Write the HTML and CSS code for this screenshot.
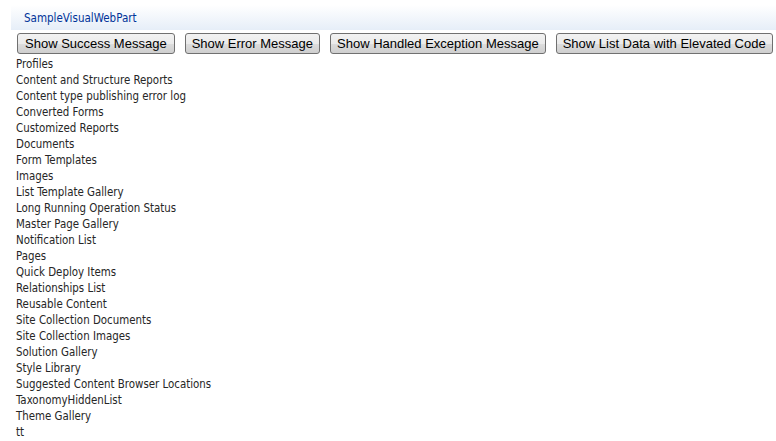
FILE: index.html
```html
<!DOCTYPE html>
<html>
<head>
<meta charset="utf-8">
<link rel="stylesheet" href="styles.css">
</head>
<body>
<div class="webpart">
  <div class="title-bar"><span class="title">SampleVisualWebPart</span></div>
  <div class="content">
    <div class="buttons">
      <button class="btn btn-wide">Show Success Message</button>
      <button class="btn">Show Error Message</button>
      <button class="btn">Show Handled Exception Message</button>
      <button class="btn">Show List Data with Elevated Code</button>
    </div>
    <ul class="lists">
      <li>Profiles</li>
      <li>Content and Structure Reports</li>
      <li>Content type publishing error log</li>
      <li>Converted Forms</li>
      <li>Customized Reports</li>
      <li>Documents</li>
      <li>Form Templates</li>
      <li>Images</li>
      <li>List Template Gallery</li>
      <li>Long Running Operation Status</li>
      <li>Master Page Gallery</li>
      <li>Notification List</li>
      <li>Pages</li>
      <li>Quick Deploy Items</li>
      <li>Relationships List</li>
      <li>Reusable Content</li>
      <li>Site Collection Documents</li>
      <li>Site Collection Images</li>
      <li>Solution Gallery</li>
      <li>Style Library</li>
      <li>Suggested Content Browser Locations</li>
      <li>TaxonomyHiddenList</li>
      <li>Theme Gallery</li>
      <li>tt</li>
    </ul>
  </div>
</div>
</body>
</html>
```
FILE: styles.css
```css
html, body {
  margin: 0;
  padding: 0;
  background: #ffffff;
}
body {
  font-family: "DejaVu Sans Condensed", "DejaVu Sans", sans-serif;
}
.webpart {
  padding: 5px 0 0 11px;
}
.title-bar {
  height: 25px;
  background: linear-gradient(to bottom, #ffffff 0%, #e6eef8 100%);
  display: flex;
  align-items: center;
  padding-left: 13px;
}
.title {
  font-size: 11.5px;
  color: #003399;
}
.content {
  padding-left: 5px;
}
.buttons {
  display: flex;
  gap: 10px;
  padding-top: 3px;
  padding-left: 1px;
}
.btn {
  flex: none;
  white-space: nowrap;
  font-family: "Liberation Sans", Arial, sans-serif;
  font-size: 13px;
  height: 21px;
  padding: 0 6px;
  border: 1px solid #707070;
  border-radius: 3px;
  background: linear-gradient(to bottom, #f2f2f2 0%, #ebebeb 50%, #dddddd 51%, #cfcfcf 100%);
  color: #000;
  line-height: 19px;
}
.btn-wide {
  padding: 0 7px;
}
.lists {
  list-style: none;
  margin: 2px 0 0 0;
  padding: 0;
}
.lists li {
  font-size: 11.4px;
  line-height: 16px;
  color: #262626;
}
```
